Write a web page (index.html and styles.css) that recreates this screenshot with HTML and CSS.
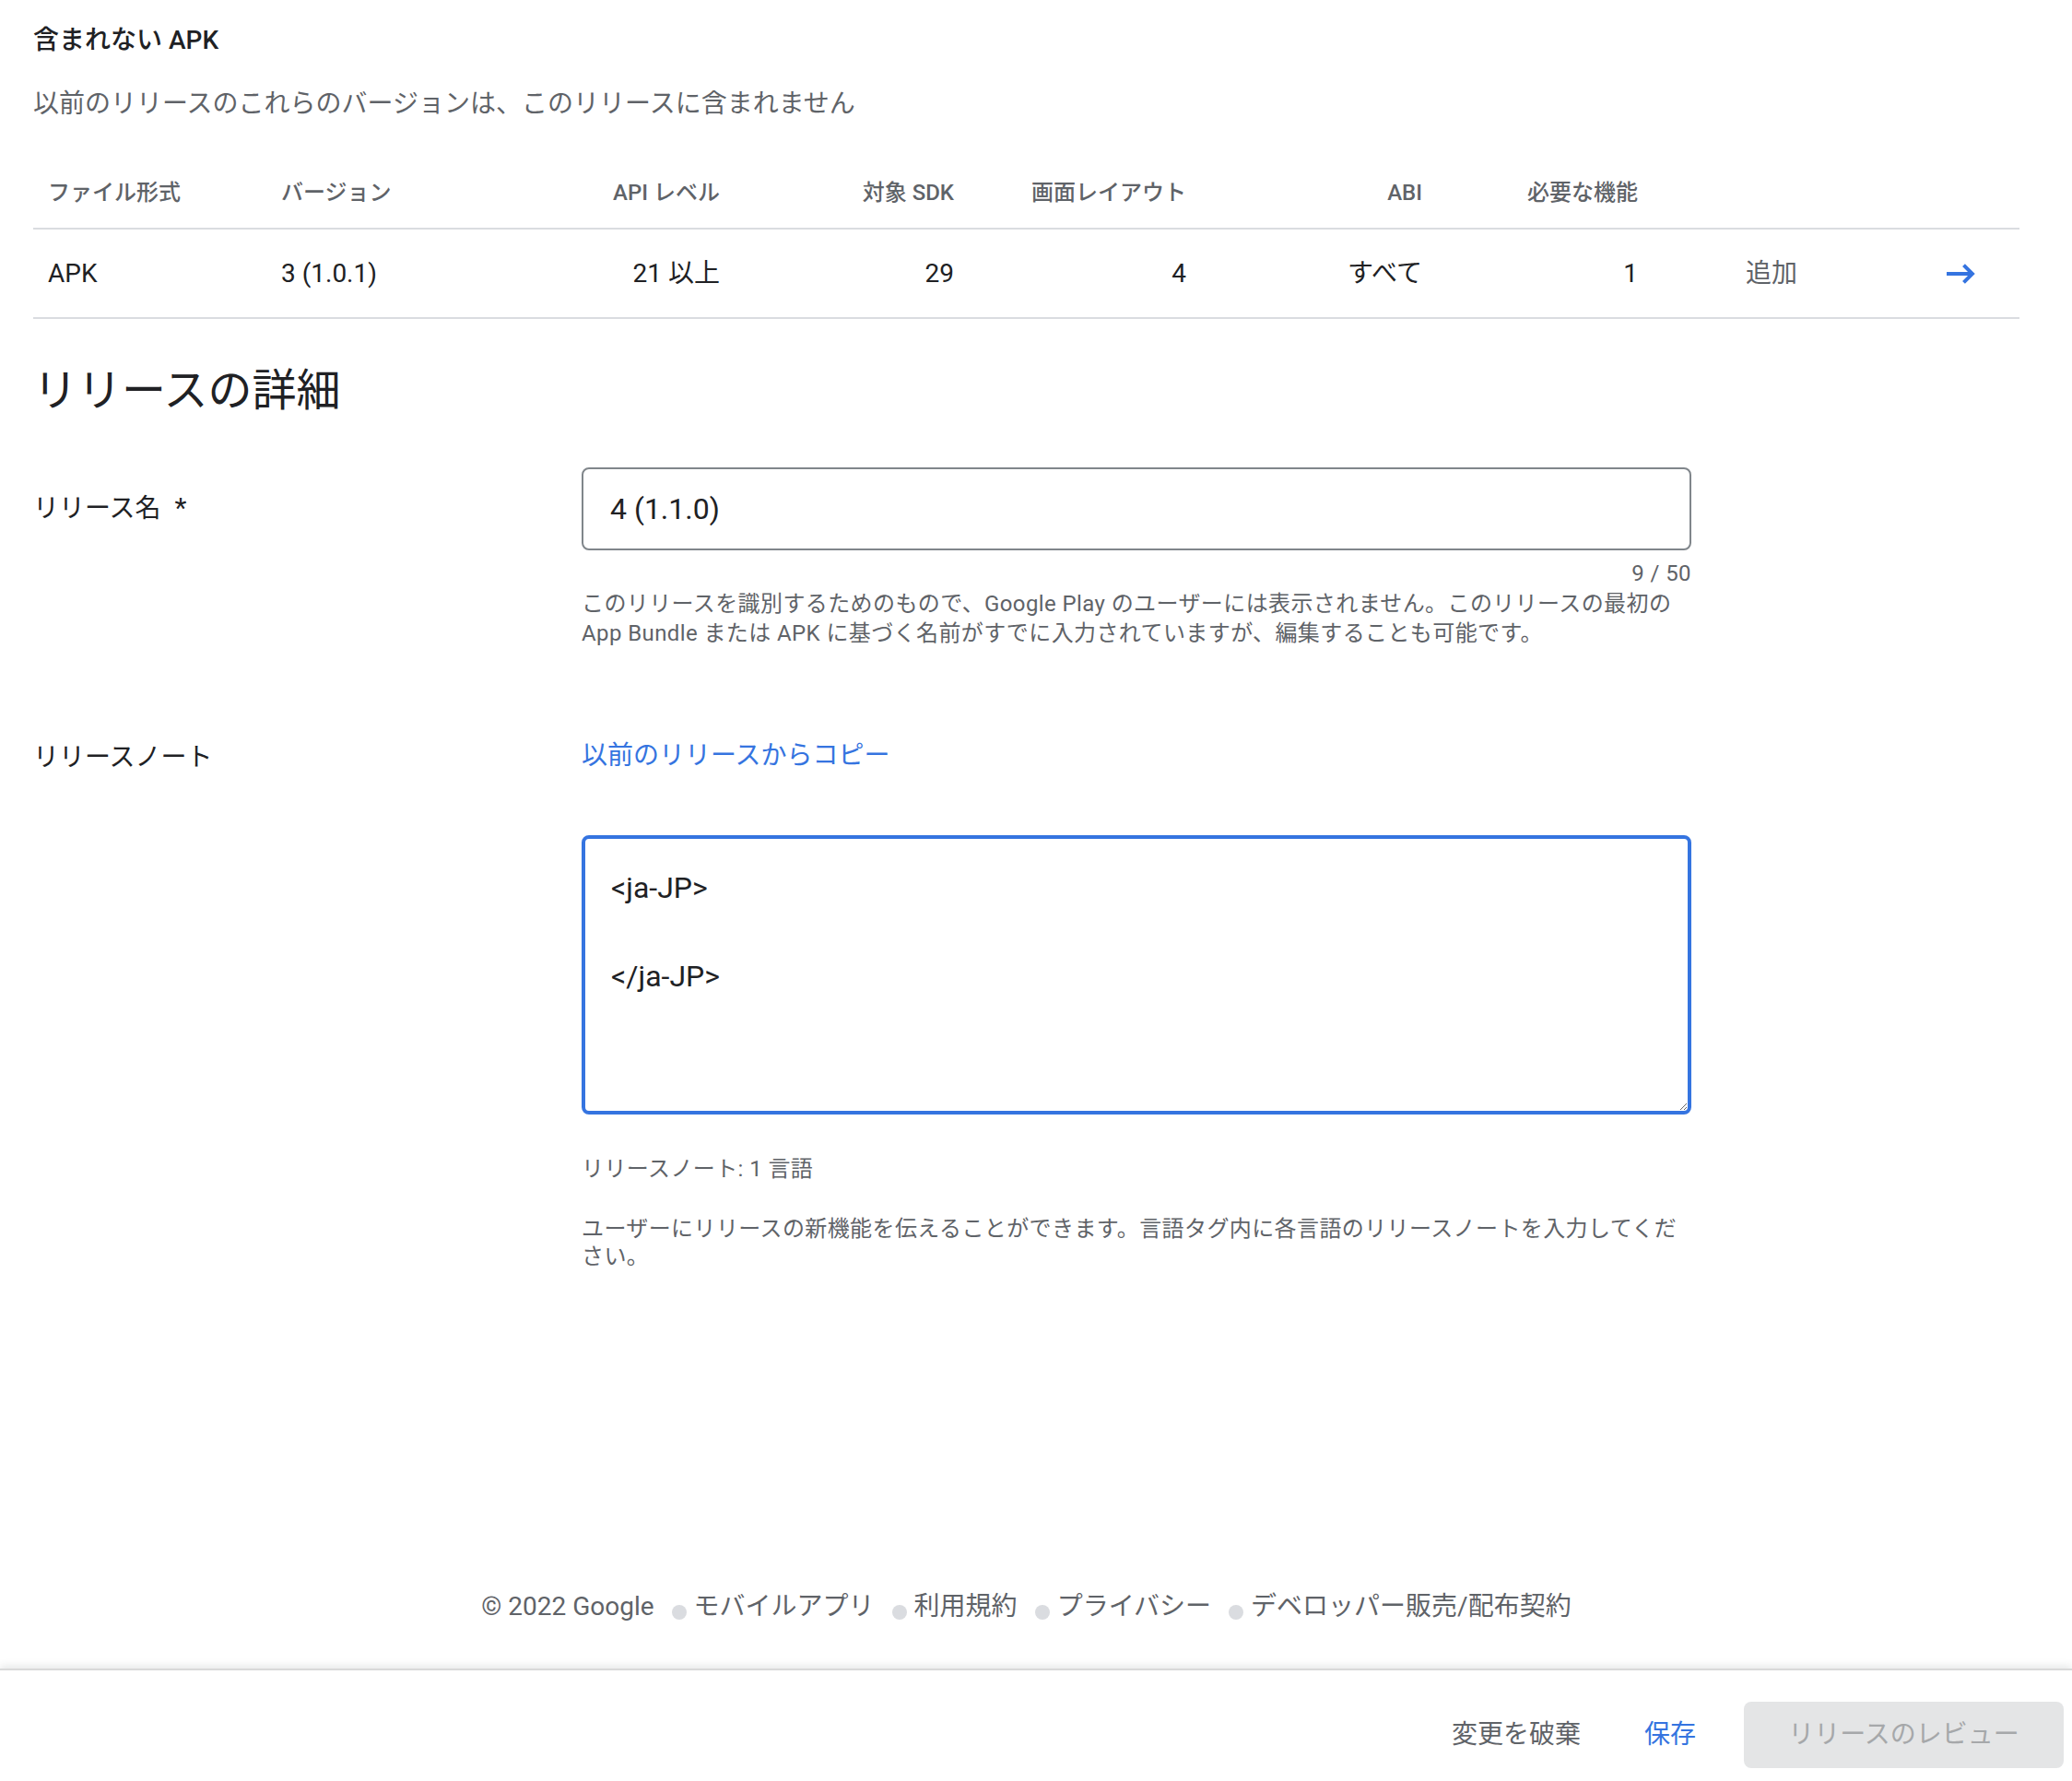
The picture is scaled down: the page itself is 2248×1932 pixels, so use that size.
FILE: index.html
```html
<!DOCTYPE html>
<html lang="ja">
<head>
<meta charset="utf-8">
<title>リリースの詳細</title>
<link rel="stylesheet" href="styles.css">
</head>
<body>
<div class="app">
  <main class="content">
    <section class="excluded">
      <h3 class="excluded-title">含まれない APK</h3>
      <p class="excluded-desc">以前のリリースのこれらのバージョンは、このリリースに含まれません</p>
      <table class="apk-table">
        <colgroup>
          <col class="col-type"><col class="col-version"><col class="col-api"><col class="col-sdk"><col class="col-screen"><col class="col-abi"><col class="col-feat"><col class="col-status"><col class="col-go">
        </colgroup>
        <thead>
          <tr>
            <th>ファイル形式</th>
            <th>バージョン</th>
            <th class="num">API レベル</th>
            <th class="num">対象 SDK</th>
            <th class="num">画面レイアウト</th>
            <th class="num">ABI</th>
            <th class="num">必要な機能</th>
            <th></th>
            <th></th>
          </tr>
        </thead>
        <tbody>
          <tr>
            <td>APK</td>
            <td>3 (1.0.1)</td>
            <td class="num">21 以上</td>
            <td class="num">29</td>
            <td class="num">4</td>
            <td class="num">すべて</td>
            <td class="num">1</td>
            <td class="status">追加</td>
            <td class="go">
              <svg class="go-arrow" width="31" height="22" viewBox="0 0 31 22" aria-hidden="true">
                <path d="M0 11H27.5" fill="none" stroke="currentColor" stroke-width="4"/>
                <path d="M18.5 1.6L27.9 11L18.5 20.4" fill="none" stroke="currentColor" stroke-width="4"/>
              </svg>
            </td>
          </tr>
        </tbody>
      </table>
    </section>

    <section class="details">
      <h2 class="details-title">リリースの詳細</h2>

      <div class="field-row name-row">
        <label class="field-label" for="release-name">リリース名 <span class="req">*</span></label>
        <div class="field-body">
          <input id="release-name" class="text-input" type="text" value="4 (1.1.0)">
          <div class="counter">9 / 50</div>
          <p class="hint">このリリースを識別するためのもので、Google Play のユーザーには表示されません。このリリースの最初の App Bundle または APK に基づく名前がすでに入力されていますが、編集することも可能です。</p>
        </div>
      </div>

      <div class="field-row notes-row">
        <div class="field-label">リリースノート</div>
        <div class="field-body">
          <a class="copy-link" href="#">以前のリリースからコピー</a>
          <textarea class="notes" spellcheck="false">&lt;ja-JP&gt;

&lt;/ja-JP&gt;</textarea>
          <div class="notes-count">リリースノート: 1 言語</div>
          <p class="hint notes-hint">ユーザーにリリースの新機能を伝えることができます。言語タグ内に各言語のリリースノートを入力してください。</p>
        </div>
      </div>
    </section>

    <footer class="site-footer">
      <span>© 2022 Google</span><span class="dot"></span><a href="#">モバイルアプリ</a><span class="dot"></span><a href="#">利用規約</a><span class="dot"></span><a href="#">プライバシー</a><span class="dot"></span><a href="#">デベロッパー販売/配布契約</a>
    </footer>
  </main>

  <div class="action-bar">
    <button class="btn btn-discard" type="button">変更を破棄</button>
    <button class="btn btn-save" type="button">保存</button>
    <button class="btn btn-review" type="button" disabled>リリースのレビュー</button>
  </div>
</div>
</body>
</html>
```

FILE: styles.css
```css
* {
  box-sizing: border-box;
}

html, body {
  margin: 0;
  padding: 0;
  background: #ffffff;
}

body {
  font-family: Roboto, "Noto Sans CJK JP", sans-serif;
  color: #202124;
}

.app {
  width: 2248px;
  overflow: hidden;
}

.content {
  padding: 24px 0 0 36px;
  width: 2191px;
}

/* ---------- excluded APK section ---------- */
.excluded-title {
  margin: 0;
  font-size: 28px;
  line-height: 40px;
  font-weight: 500;
  color: #202124;
}

.excluded-desc {
  margin: 29px 0 0;
  font-size: 28px;
  line-height: 40px;
  color: #5f6368;
}

.apk-table {
  margin-top: 38px;
  width: 2155px;
  table-layout: fixed;
  border-collapse: separate;
  border-spacing: 0;
}

.col-type { width: 253px; }
.col-version { width: 271px; }
.col-api { width: 237px; }
.col-sdk { width: 254px; }
.col-screen { width: 252px; }
.col-abi { width: 256px; }
.col-feat { width: 234px; }
.col-status { width: 267px; }
.col-go { width: 131px; }

.apk-table th {
  padding: 22px 16px;
  font-size: 24px;
  line-height: 32px;
  font-weight: 500;
  color: #5f6368;
  text-align: left;
  white-space: nowrap;
  border-bottom: 2px solid #dadce0;
}

.apk-table td {
  padding: 28px 16px 27px;
  font-size: 28px;
  line-height: 40px;
  color: #202124;
  white-space: nowrap;
  border-bottom: 2px solid #dadce0;
}

.apk-table .num {
  text-align: right;
}

.apk-table td.status {
  padding-left: 101px;
  color: #5f6368;
}

.apk-table td.go {
  padding-right: 48px;
  color: #3574e0;
}

.go-arrow {
  display: block;
  margin-left: auto;
}

/* ---------- details section ---------- */
.details-title {
  margin: 48px 0 0;
  font-size: 48px;
  line-height: 60px;
  font-weight: 400;
  color: #202124;
}

.field-row {
  display: grid;
  grid-template-columns: 595px 1204px;
}

.name-row {
  margin-top: 53px;
}

.notes-row {
  margin-top: 97px;
}

.field-label {
  display: block;
  padding-top: 24px;
  font-size: 28px;
  line-height: 40px;
  color: #202124;
}

.field-label .req {
  margin-left: 8px;
  font-size: 30px;
}

.notes-row .field-label {
  padding-top: 2px;
}

.text-input {
  display: block;
  width: 1204px;
  height: 90px;
  margin: 0;
  padding: 0 25px 0 29px;
  border: 2px solid #80868b;
  border-radius: 8px;
  font-family: Roboto, "Noto Sans CJK JP", sans-serif;
  font-size: 32px;
  color: #202124;
  background: #ffffff;
  outline: none;
}

.counter {
  margin-top: 9px;
  text-align: right;
  font-size: 24px;
  line-height: 32px;
  color: #5f6368;
  letter-spacing: 0.4px;
}

.hint {
  margin: 1px 0 0;
  font-size: 24px;
  line-height: 32px;
  color: #5f6368;
  letter-spacing: 0.4px;
}

.copy-link {
  display: block;
  font-size: 28px;
  line-height: 40px;
  color: #3574e0;
  text-decoration: none;
}

.notes {
  display: block;
  width: 1204px;
  height: 303px;
  margin: 66px 0 0;
  padding: 29px 25px 29px 28px;
  border: 4px solid #3574e0;
  border-radius: 8px;
  font-family: Roboto, "Noto Sans CJK JP", sans-serif;
  font-size: 32px;
  line-height: 48px;
  color: #202124;
  background: #ffffff;
  outline: none;
  resize: both;
}

.notes-count {
  margin-top: 43px;
  font-size: 24px;
  line-height: 32px;
  color: #5f6368;
  letter-spacing: 0.4px;
}

.notes-hint {
  margin-top: 34px;
  line-height: 30px;
}

/* ---------- footer ---------- */
.site-footer {
  margin-top: 345px;
  width: 2155px;
  text-align: center;
  font-size: 28px;
  line-height: 40px;
  color: #5f6368;
  white-space: nowrap;
}

.site-footer a {
  color: #5f6368;
  text-decoration: none;
}

.site-footer .dot {
  display: inline-block;
  width: 16px;
  height: 16px;
  margin: 0 8px 0 19px;
  border-radius: 50%;
  background: #dadce0;
  vertical-align: -5px;
}

/* ---------- bottom action bar ---------- */
.action-bar {
  margin-top: 47px;
  height: 122px;
  display: flex;
  justify-content: flex-end;
  align-items: flex-start;
  padding: 34px 9px 0 0;
  border-top: 2px solid #d9d9d9;
  box-shadow: 0 -3px 8px rgba(60, 64, 67, 0.12);
}

.btn {
  height: 72px;
  padding: 0 24px;
  border: none;
  border-radius: 8px;
  background: transparent;
  font-family: Roboto, "Noto Sans CJK JP", sans-serif;
  font-size: 28px;
  line-height: 40px;
  cursor: pointer;
}

.btn-discard {
  color: #5f6368;
  margin-right: 21px;
}

.btn-save {
  color: #3574e0;
  margin-right: 28px;
}

.btn-review {
  width: 347px;
  padding: 0 40px;
  background: #e4e5e6;
  color: #a6a8aa;
  cursor: default;
}
```
